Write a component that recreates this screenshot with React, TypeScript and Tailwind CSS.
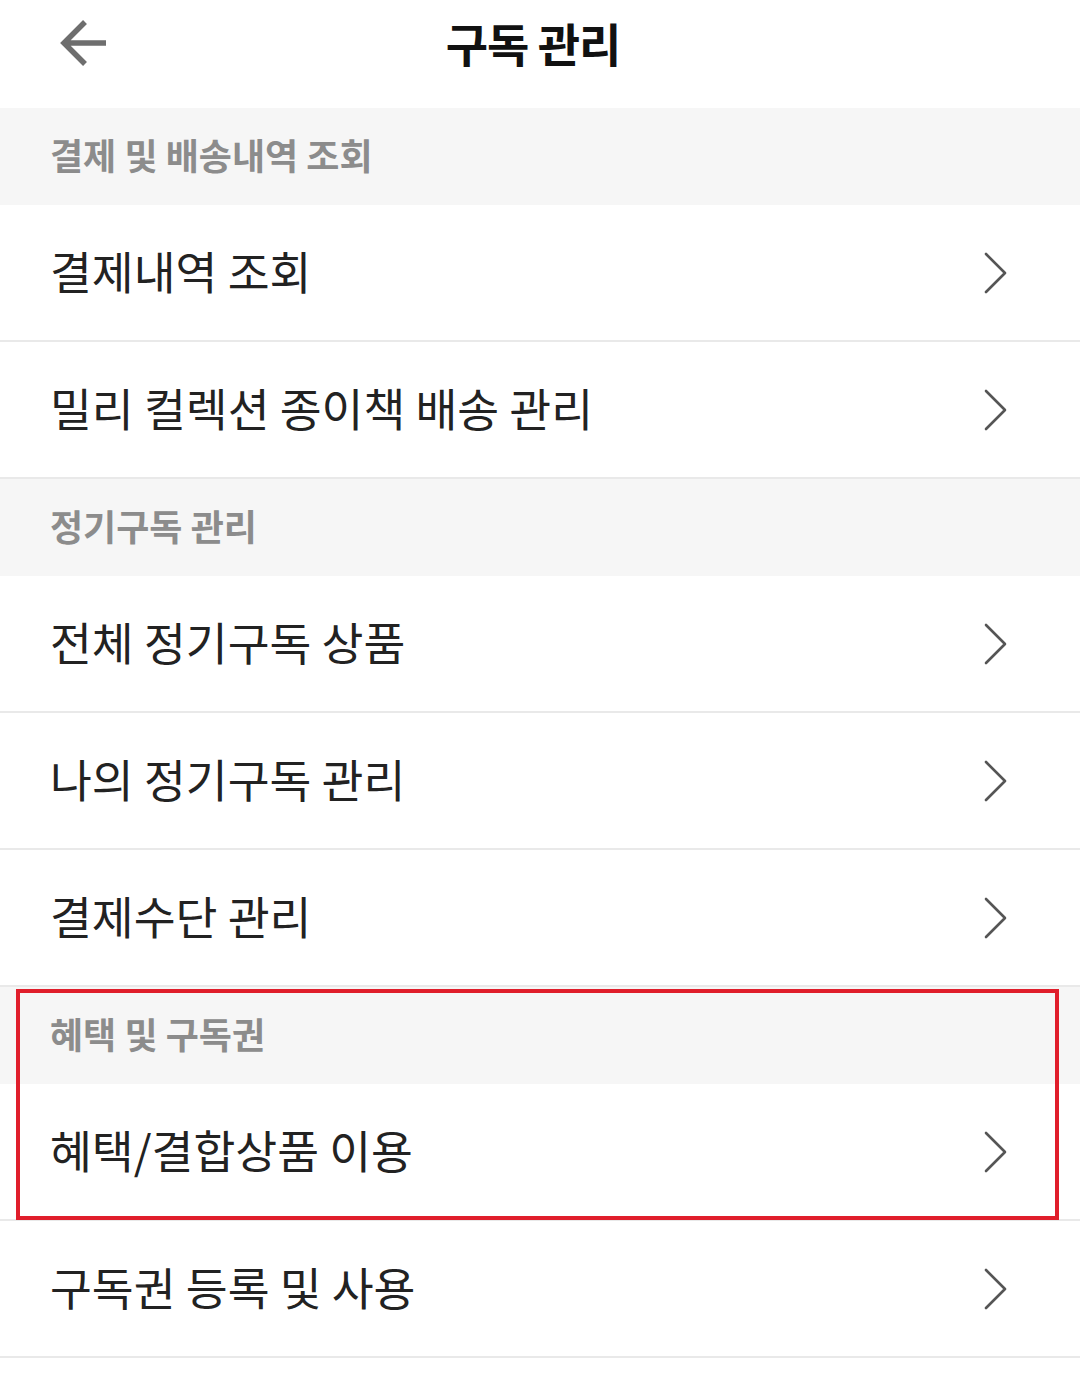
import React from 'react';

const FONT = '"Noto Sans CJK KR", "Noto Sans", sans-serif';

type Section = { title: string; items: string[]; highlight?: boolean };

const sections: Section[] = [
  { title: '결제 및 배송내역 조회', items: ['결제내역 조회', '밀리 컬렉션 종이책 배송 관리'] },
  { title: '정기구독 관리', items: ['전체 정기구독 상품', '나의 정기구독 관리', '결제수단 관리'] },
  { title: '혜택 및 구독권', items: ['혜택/결합상품 이용', '구독권 등록 및 사용'], highlight: true },
];

const BackArrow = () => (
  <svg width="48" height="48" viewBox="0 0 48 48" fill="none">
    <path d="M3 24H46M25 3L4 24L25 45" stroke="#6e6e6e" strokeWidth="5.5" strokeLinejoin="miter" />
  </svg>
);

const Chevron = () => (
  <svg width="24" height="42" viewBox="0 0 24 42" fill="none">
    <path d="M2 2L21 21L2 40" stroke="#555" strokeWidth="2.6" strokeLinecap="round" strokeLinejoin="round" />
  </svg>
);

const Row = ({ label }: { label: string }) => (
  <div className="flex items-center justify-between h-[137px] pl-[50px] pr-[72px] bg-white border-b-2 border-[#e9e9e9]">
    <span className="text-[45.5px] text-[#222] pb-[5px]">{label}</span>
    <Chevron />
  </div>
);

const SectionHeader = ({ title }: { title: string }) => (
  <div className="flex items-center h-[97px] pl-[50px] bg-[#f6f6f6]">
    <span className="text-[36px] font-bold text-[#8c8c8c] pb-[6px]">{title}</span>
  </div>
);

export default function App() {
  return (
    <div className="w-[1080px] h-[1390px] bg-white overflow-hidden" style={{ fontFamily: FONT }}>
      {/* Header */}
      <div className="flex items-center h-[108px] pl-[60px] pr-[58px]">
        <button className="flex items-center pb-[22px]">
          <BackArrow />
        </button>
        <h1 className="flex-1 text-center text-[46px] font-bold text-[#111] tracking-[-1px] pb-[24px] pr-[16px]">구독 관리</h1>
        <div className="w-[48px]" />
      </div>

      {sections.map((section) => {
        if (!section.highlight) {
          return (
            <div key={section.title}>
              <SectionHeader title={section.title} />
              {section.items.map((item) => (
                <Row key={item} label={item} />
              ))}
            </div>
          );
        }
        const [first, ...rest] = section.items;
        return (
          <div key={section.title}>
            <div className="relative">
              <SectionHeader title={section.title} />
              <Row label={first} />
              {/* annotation box */}
              <div className="absolute left-[16px] right-[21px] top-[2px] bottom-[1px] border-[4px] border-[#e01e2b] pointer-events-none" />
            </div>
            {rest.map((item) => (
              <Row key={item} label={item} />
            ))}
          </div>
        );
      })}
    </div>
  );
}
